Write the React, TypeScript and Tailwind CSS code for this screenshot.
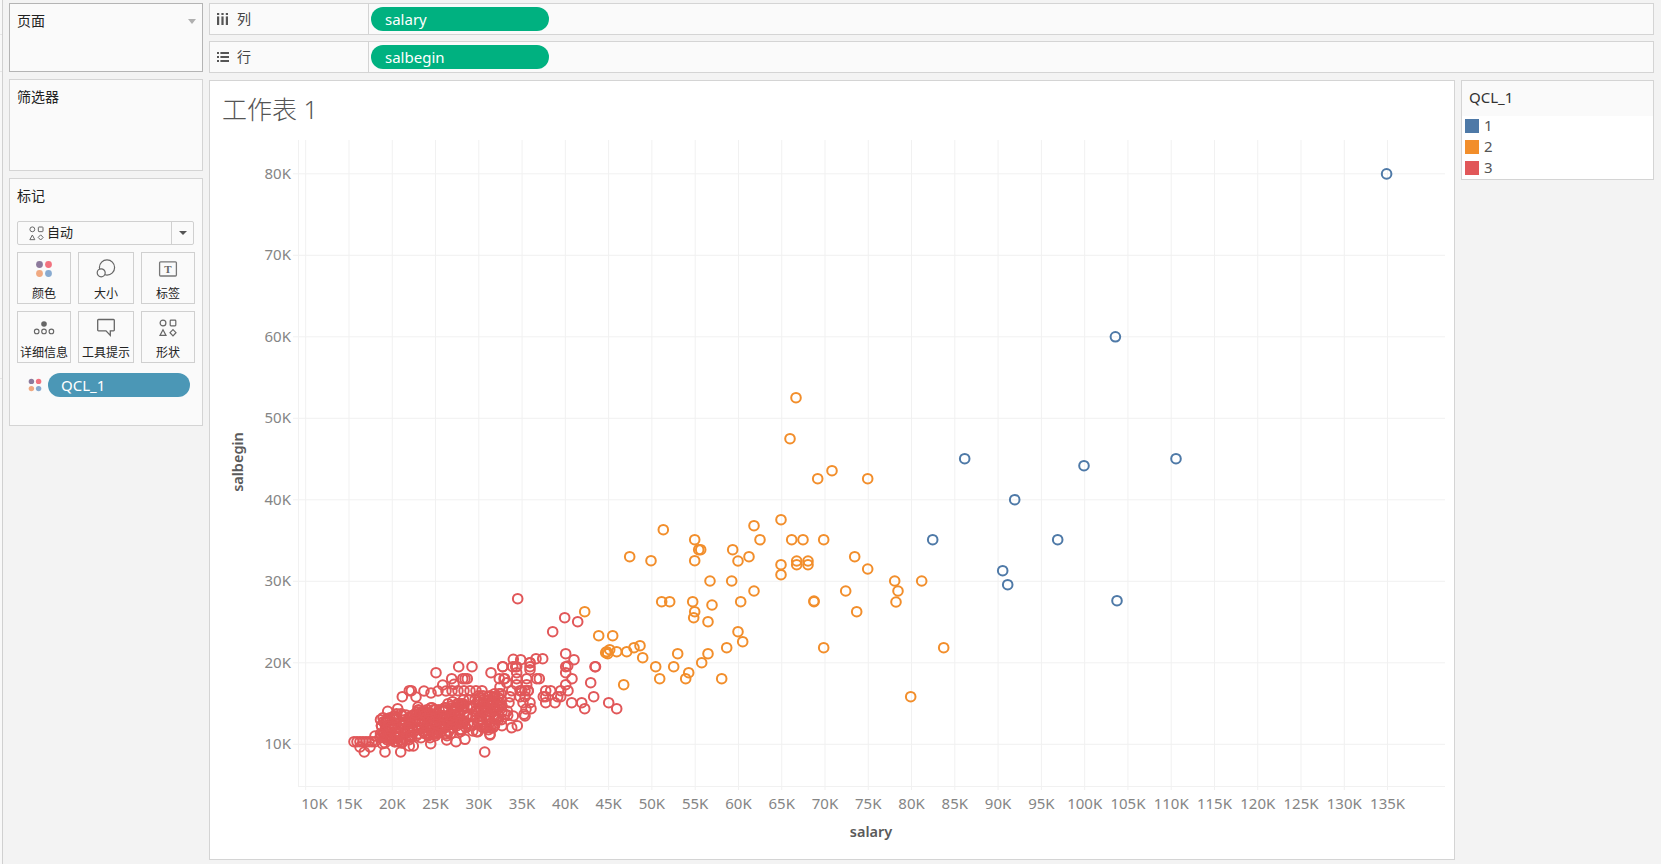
import React from "react";

const UI = "'Noto Sans', 'Noto Sans CJK SC', sans-serif";
const BLUE = "#4e79a7";
const ORANGE = "#f28e2b";
const RED = "#e15759";

type P = [number, number];

const blue: P[] = [
  [1386.6, 172.9], [1115.4, 335.8], [964.7, 457.7], [1084, 464.7], [1176, 457.7], [1014.7, 498.7],
  [932.7, 538.7], [1057.7, 538.7], [1002.7, 569.7], [1007.7, 583.7], [1117, 599.7],
];

const orange: P[] = [
  [796, 396.7], [790, 437.7], [832, 469.7], [817.7, 477.7], [867.7, 477.7], [781, 518.7], [754, 524.7],
  [760, 538.7], [791.7, 538.7], [803, 538.7], [823.7, 538.7], [732.7, 548.7], [700.7, 548.7], [749, 555.7],
  [738, 560], [854.7, 555.7], [796.7, 560], [796.7, 563.7], [808, 560], [808, 563.7], [781, 563.7],
  [781, 573.7], [867.7, 568], [894.7, 580], [921.7, 580], [710, 580], [731.7, 580], [898, 590], [754, 590],
  [845.7, 590], [896, 601], [814, 600], [814, 600.7], [740.7, 600.7], [712, 604], [856.7, 610.7],
  [708, 620.7], [738, 630.7], [742.7, 640.7], [726.7, 646.7], [823.7, 646.7], [943.7, 646.7], [708, 652.7],
  [701.7, 661.7], [721.7, 677.7], [910.7, 695.7], [663.3, 528.7], [694.7, 538.7], [698.7, 548.7],
  [694.7, 559.7], [651, 559.7], [629.7, 555.7], [692.7, 600.7], [661.7, 600.7], [669.7, 600.7],
  [694.7, 610.7], [693.7, 616.7], [688.7, 671.7], [685.7, 677.7], [677.7, 652.7], [673.7, 665.7],
  [655.7, 665.7], [659.7, 677.7], [642.7, 656.7], [640, 644.7], [634, 646.7], [626.7, 650.7], [616.7, 650.7],
  [609.7, 648.7], [606.7, 650.7], [607.7, 652.7], [605.7, 651.7], [612.7, 634.7], [598.7, 634.7],
  [584.7, 610.7], [623.7, 683.7],
];

// Outlying red marks, then the dense band is filled in below.
const redOutliers: P[] = [
  [517.7, 597.7], [564.7, 616.7], [577.7, 620.7], [552.7, 630.7], [542.7, 657.7], [565.7, 652.7], [574, 658.7],
  [565.7, 665.7], [567.7, 665], [565.7, 671.7], [572, 677.7], [565.7, 683.7], [568, 689.7], [595, 665.7],
  [595.5, 665.7], [590.7, 681.7], [593.7, 695.7], [608.7, 701.7], [616.7, 707.7], [581.7, 701.7], [584.7, 707.7],
  [571.7, 701.7], [560.7, 689.7], [557.7, 695.7], [560.7, 695.7], [555, 701.7], [550.7, 689.7], [545.7, 689.7],
  [543.3, 695.7], [545.7, 695.7], [545.7, 701.7], [520.7, 658.7], [530, 661.7], [530, 665.7], [530, 668.7],
  [512.7, 665.7], [515.7, 665.7], [502.7, 665.7], [536.7, 677.7], [539.3, 677.7], [516.7, 671.7], [516.7, 677.7],
  [516.7, 683.7], [526.7, 677.7], [526.7, 683.7], [504.7, 677.7], [506.7, 681.7], [520, 689.7], [525, 689.7],
  [528, 689.7], [510, 695.7], [520, 695.7], [525, 695.7], [530, 701.7], [523, 701.7], [509, 701.7], [531, 707.7],
  [524, 713.3], [525, 715], [507.3, 710], [505, 713.3], [436, 671.7], [458.7, 665.7], [472, 665.7], [451.7, 677.7],
  [462.7, 677.7], [465, 677.7], [467.3, 677.7], [442.7, 684], [454, 683.3], [411.3, 689.7], [409.3, 689.7],
  [402.3, 695.7], [387.7, 710.3], [397.7, 707.7], [387.7, 718.3], [387.7, 720.7], [390, 716.7], [375, 735],
  [354, 740.7], [357, 740.7], [360, 740.7], [363, 740.7], [366, 740.7], [369, 740.7], [372, 740.7], [375, 740.7],
  [364.3, 751], [385, 751], [400.7, 751], [484.7, 751], [360, 746], [370, 746], [490, 734], [490, 733.3],
  [511.7, 726.7], [517.3, 724.7], [472.7, 730], [465, 738.3], [456, 740.7], [446.7, 739], [430.7, 742.7],
  [413.3, 745], [409.3, 745], [402, 742], [385, 742], [392, 738], [502.7, 665.7], [513.3, 658.3], [530, 661.7],
  [491, 671.7], [499.3, 677.7], [504, 677.7], [536, 657.7], [516.7, 665.7], [500, 686], [511.7, 689.7],
  [521.7, 689.7], [528.3, 689.7], [513.3, 715], [526, 708], [507.7, 714.3],
  [416, 696], [424, 690], [431, 692], [438, 690], [446, 690], [452, 689.7], [458, 689.7], [464, 689.7],
  [470, 689.7], [476, 689.7], [482, 689.7], [488, 695.7], [494, 695.7], [418, 706], [406, 714], [400, 722],
];

// Small seeded generator so the cluster draws the same on every load.
function makeCluster(count: number): P[] {
  let s = 20240611;
  const rnd = () => {
    s = (s * 1664525 + 1013904223) >>> 0;
    return s / 4294967296;
  };
  const out: P[] = [];
  for (let i = 0; i < count; i++) {
    const x = 380 + rnd() * 122;
    const t = (x - 380) / 122;
    const top = 716 - 26 * t;
    const bottom = 743 - 16 * t;
    const y = top + rnd() * (bottom - top);
    out.push([Math.round(x * 2) / 2, Math.round(y / 2) * 2 + 0.7]);
  }
  return out;
}

const red: P[] = [...redOutliers, ...makeCluster(300)];

const xKs = Array.from({ length: 26 }, (_, i) => 10 + i * 5);
const yKs = [10, 20, 30, 40, 50, 60, 70, 80];
const xAt = (k: number) => 305.7 + (k - 10) * 8.655;
const yAt = (k: number) => 743.3 - (k - 10) * 8.15;

function Chart() {
  const grid = "#f1f1f1";
  const tick = "#858585";
  return (
    <svg width={1243} height={728} viewBox="210 130 1243 728" className="block">
      {xKs.map((k) => (
        <line key={k} x1={xAt(k)} x2={xAt(k)} y1={139} y2={789} stroke={grid} strokeWidth={1} />
      ))}
      {yKs.map((k) => (
        <line key={k} x1={293} x2={1445} y1={yAt(k)} y2={yAt(k)} stroke={grid} strokeWidth={1} />
      ))}
      <line x1={298.5} x2={298.5} y1={139} y2={785.5} stroke={grid} />
      <line x1={298} x2={1445} y1={785.5} y2={785.5} stroke={grid} />
      {yKs.map((k) => (
        <text key={k} x={291} y={yAt(k) + 5} textAnchor="end" fontSize={15} fill={tick} fontFamily={UI}>
          {k}K
        </text>
      ))}
      {xKs.filter((k) => k <= 135).map((k) => (
        <text key={k} x={k === 10 ? 314.5 : xAt(k)} y={808} textAnchor="middle" fontSize={15} fill={tick} fontFamily={UI}>
          {k}K
        </text>
      ))}
      <text x={871} y={836} textAnchor="middle" fontSize={14.5} fontWeight={600} fill="#5a5a5a" fontFamily={UI}>
        salary
      </text>
      <text
        transform="translate(243 461) rotate(-90)"
        textAnchor="middle"
        fontSize={14.5}
        fontWeight={600}
        fill="#5a5a5a"
        fontFamily={UI}
      >
        salbegin
      </text>
      <g fill="none" strokeWidth={2}>
        <g stroke={RED}>{red.map(([x, y], i) => <circle key={i} cx={x} cy={y} r={4.8} />)}</g>
        <g stroke={ORANGE}>{orange.map(([x, y], i) => <circle key={i} cx={x} cy={y} r={4.8} />)}</g>
        <g stroke={BLUE}>{blue.map(([x, y], i) => <circle key={i} cx={x} cy={y} r={4.8} />)}</g>
      </g>
    </svg>
  );
}

function ColorDots({ size = 20 }: { size?: number }) {
  return (
    <svg width={size} height={size} viewBox="0 0 20 20">
      <circle cx={5.5} cy={5.5} r={3.4} fill="#8c7a9c" />
      <circle cx={14.5} cy={5.5} r={3.4} fill="#f2727f" />
      <circle cx={5.5} cy={14.5} r={3.4} fill="#f0a981" />
      <circle cx={14.5} cy={14.5} r={3.4} fill="#88aad0" />
    </svg>
  );
}

function ShapesIcon({ size = 18 }: { size?: number }) {
  return (
    <svg width={size} height={size} viewBox="0 0 18 18" fill="none" stroke="#666" strokeWidth={1.2}>
      <circle cx={4} cy={4} r={2.9} />
      <rect x={11.2} y={1.2} width={5.6} height={5.6} rx={0.8} />
      <path d="M4 10.8 L7 16.4 H1 Z" />
      <path d="M14 10.6 L17 13.7 L14 16.8 L11 13.7 Z" />
    </svg>
  );
}

function SizeIcon() {
  return (
    <svg width={20} height={20} viewBox="0 0 20 20" fill="none" stroke="#666" strokeWidth={1.2}>
      <circle cx={11} cy={8.5} r={7.6} />
      <circle cx={5.2} cy={13.8} r={4} fill="#fafafa" />
    </svg>
  );
}

function LabelIcon() {
  return (
    <svg width={20} height={20} viewBox="0 0 20 20" fill="none">
      <rect x={1.6} y={2.8} width={16.8} height={14.2} rx={1} stroke="#777" strokeWidth={1.3} />
      <text x={10} y={14} textAnchor="middle" fontSize={11} fontWeight={700} fill="#666" fontFamily="'Liberation Serif', serif">
        T
      </text>
    </svg>
  );
}

function DetailIcon() {
  return (
    <svg width={22} height={20} viewBox="0 0 22 20" fill="none" stroke="#666" strokeWidth={1.1}>
      <circle cx={11} cy={6} r={2.8} fill="#666" stroke="none" />
      <circle cx={3.7} cy={13.4} r={2.3} />
      <circle cx={11} cy={13.4} r={2.3} />
      <circle cx={18.4} cy={13.4} r={2.3} />
    </svg>
  );
}

function TooltipIcon() {
  return (
    <svg width={20} height={20} viewBox="0 0 20 20" fill="none" stroke="#666" strokeWidth={1.3}>
      <path d="M2.5 1.5 H17.5 A0.8 0.8 0 0 1 18.3 2.3 V12 A0.8 0.8 0 0 1 17.5 12.8 H14.3 V17.4 L10 12.8 H2.5 A0.8 0.8 0 0 1 1.7 12 V2.3 A0.8 0.8 0 0 1 2.5 1.5 Z" />
    </svg>
  );
}

function MarkCard({ label, children, h }: { label: string; children: React.ReactNode; h: string }) {
  return (
    <div className={`flex ${h} flex-col items-center border border-[#d0d0d0] bg-[#fafafa] pt-[6px]`}>
      <div className="flex h-[22px] items-center justify-center">{children}</div>
      <span className="mt-[6px] whitespace-nowrap text-[12px] leading-[18px] text-[#222]">{label}</span>
    </div>
  );
}

function Pill({ text, className }: { text: string; className: string }) {
  return (
    <div className={`flex h-[24px] items-center rounded-full text-[15px] text-white ${className}`}>
      {text}
    </div>
  );
}

function Shelf({ icon, label, pill }: { icon: React.ReactNode; label: string; pill: string }) {
  return (
    <div className="flex h-[32px] items-center border border-[#d4d4d4] bg-[#fafafa]">
      <div className="flex h-full w-[159px] items-center border-r border-[#d4d4d4] pl-[7px]">
        <span className="flex w-[20px] items-center">{icon}</span>
        <span className="-mt-[1px] text-[14px] text-[#444]">{label}</span>
      </div>
      <Pill text={pill} className="ml-[2px] w-[178px] bg-[#00b180] pl-[14px]" />
    </div>
  );
}

export default function App() {
  return (
    <div
      className="flex h-[864px] w-[1661px] overflow-hidden bg-[#f3f3f3]"
      style={{ fontFamily: UI }}
    >
      {/* Neighbouring pane's edge at the far left */}
      <div className="flex w-[2px] flex-col bg-[#f8f8f8]">
        <div className="h-[35px] border-b border-[#e6e6e6]" />
        <div className="h-[37px] border-b border-[#e6e6e6]" />
        <div className="h-[307px] border-b border-[#e6e6e6]" />
      </div>
      <div className="w-[1px] bg-[#d0d0d0]" />

      {/* Left rail: pages, filters, marks */}
      <div className="ml-[6px] flex w-[194px] flex-col gap-[7px] pt-[3px]">
        <div className="relative h-[69px] border border-[#b4b4b4] bg-[#fafafa] pl-[7px] pt-[6px] text-[14px] leading-[22px] text-[#222]">
          页面
          <div className="absolute right-[6px] top-[15px] h-0 w-0 border-x-[4px] border-t-[5px] border-x-transparent border-t-[#b0b0b0]" />
        </div>
        <div className="h-[92px] border border-[#d4d4d4] bg-[#fafafa] pl-[7px] pt-[6px] text-[14px] leading-[22px] text-[#222]">
          筛选器
        </div>
        <div className="flex h-[248px] flex-col border border-[#d4d4d4] bg-[#fafafa] pl-[7px] pr-[8px] pt-[6px]">
          <div className="text-[14px] leading-[22px] text-[#222]">标记</div>
          <div className="mt-[14px] flex h-[24px] items-center rounded-[2px] border border-[#d0d0d0] bg-[#fafafa]">
            <div className="flex flex-1 items-center gap-[3px] pl-[11px] text-[13px] text-[#222]">
              <ShapesIcon size={15} />
              自动
            </div>
            <div className="flex h-full w-[22px] items-center justify-center border-l border-[#d0d0d0]">
              <div className="h-0 w-0 border-x-[4px] border-t-[4px] border-x-transparent border-t-[#555]" />
            </div>
          </div>
          <div className="mt-[7px] grid grid-cols-[54px_56px_54px] gap-x-[7px] gap-y-[7px]">
            <MarkCard label="颜色" h="h-[52px]"><ColorDots /></MarkCard>
            <MarkCard label="大小" h="h-[52px]"><SizeIcon /></MarkCard>
            <MarkCard label="标签" h="h-[52px]"><LabelIcon /></MarkCard>
            <MarkCard label="详细信息" h="h-[52px]"><DetailIcon /></MarkCard>
            <MarkCard label="工具提示" h="h-[52px]"><TooltipIcon /></MarkCard>
            <MarkCard label="形状" h="h-[52px]"><ShapesIcon /></MarkCard>
          </div>
          <div className="mt-[10px] flex items-center gap-[5px] pl-[10px]">
            <ColorDots size={16} />
            <Pill text="QCL_1" className="w-[142px] bg-[#4b97b6] pl-[13px]" />
          </div>
        </div>
      </div>

      {/* Main area: shelves, worksheet and legend */}
      <div className="ml-[6px] flex w-[1445px] flex-col pt-[3px]">
        <div className="flex flex-col gap-[6px]">
          <Shelf
            label="列"
            pill="salary"
            icon={
              <svg width={11} height={12} viewBox="0 0 11 12" fill="#555">
                <rect x={0} y={0} width={2.2} height={2} />
                <rect x={0} y={3.4} width={2.2} height={8.6} />
                <rect x={4.4} y={0} width={2.2} height={2} />
                <rect x={4.4} y={3.4} width={2.2} height={8.6} />
                <rect x={8.8} y={0} width={2.2} height={2} />
                <rect x={8.8} y={3.4} width={2.2} height={8.6} />
              </svg>
            }
          />
          <Shelf
            label="行"
            pill="salbegin"
            icon={
              <svg width={12} height={10} viewBox="0 0 12 10" fill="#555">
                <rect x={0} y={0} width={2} height={2} />
                <rect x={3.4} y={0} width={8.6} height={2} />
                <rect x={0} y={4} width={2} height={2} />
                <rect x={3.4} y={4} width={8.6} height={2} />
                <rect x={0} y={8} width={2} height={2} />
                <rect x={3.4} y={8} width={8.6} height={2} />
              </svg>
            }
          />
        </div>
        <div className="mt-[7px] flex items-start gap-[6px]">
          <div className="h-[780px] w-[1246px] border border-[#d4d4d4] bg-white">
            <div className="h-[50px] pl-[12px] pt-[12px] text-[25px] font-light leading-[32px] text-[#555]">
              工作表 1
            </div>
            <Chart />
          </div>
          <div className="h-[100px] w-[193px] border border-[#d4d4d4] bg-white">
            <div className="flex h-[35px] items-center bg-[#fafafa] pb-[2px] pl-[7px] text-[15px] text-[#333]">QCL_1</div>
            <div className="flex flex-col gap-[7px] pl-[3px] pt-[3px]">
              {[
                ["1", "bg-[#4e79a7]"],
                ["2", "bg-[#f28e2b]"],
                ["3", "bg-[#e15759]"],
              ].map(([n, c]) => (
                <div key={n} className="flex h-[14px] items-center gap-[5px] text-[15px] text-[#555]">
                  <div className={`h-[14px] w-[14px] ${c}`} />
                  <span className="-mt-[2px]">{n}</span>
                </div>
              ))}
            </div>
          </div>
        </div>
      </div>
    </div>
  );
}
